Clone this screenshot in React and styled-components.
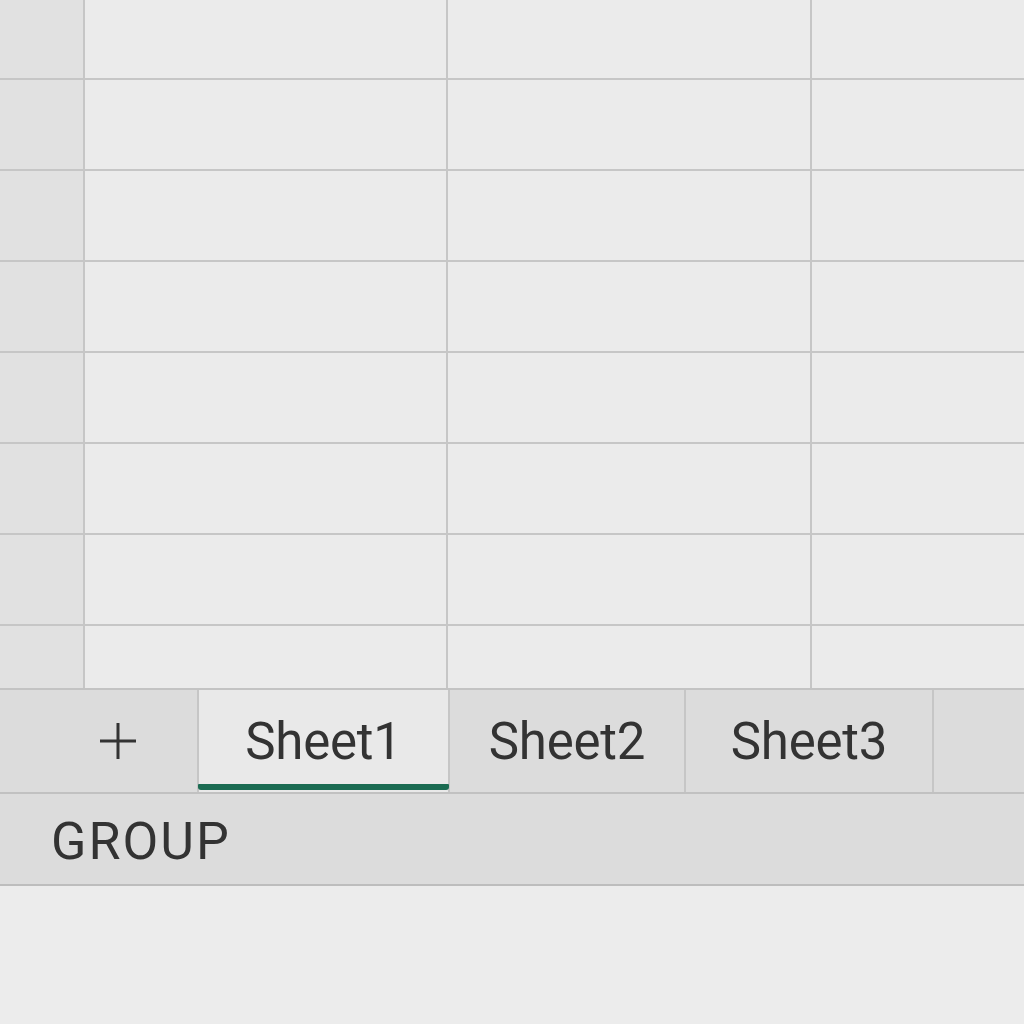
import React from 'react'
import styled, { createGlobalStyle } from 'styled-components'

const GlobalStyle = createGlobalStyle`
  html, body { margin: 0; padding: 0; background: #ececec; }
  body { font-family: Roboto, "Liberation Sans", Arial, sans-serif; }
`

const Page = styled.div`
  width: 1024px;
  height: 1024px;
  display: flex;
  flex-direction: column;
  background: #ececec;
  overflow: hidden;
`

const Grid = styled.div`
  height: 688px;
  flex: none;
  display: grid;
  grid-template-columns: 83px 361px 362px 1fr;
  grid-template-rows: 78px repeat(6, 89px) 1fr;
  gap: 2px;
  background: #c6c6c6;
  overflow: hidden;
`

const Cell = styled.div`
  background: ${(p) => (p.$header ? '#e1e1e1' : '#ebebeb')};
`

const TabBar = styled.div`
  flex: none;
  height: 102px;
  display: flex;
  background: #dcdcdc;
  border-top: 2px solid #c3c3c3;
  border-bottom: 2px solid #c1c1c1;
`

const AddButton = styled.div`
  width: 199px;
  flex: none;
  display: flex;
  align-items: center;
  justify-content: flex-end;
  padding-right: 60px;
  box-sizing: border-box;
  border-right: 2px solid #c6c6c6;
`

const Tab = styled.div`
  position: relative;
  flex: none;
  width: ${(p) => p.$w}px;
  box-sizing: border-box;
  display: flex;
  align-items: center;
  justify-content: center;
  border-right: 2px solid #c6c6c6;
  background: ${(p) => (p.$active ? '#e9e9e9' : '#dcdcdc')};
  color: #333;
  font-size: 51px;
  letter-spacing: -0.2px;
`

const Underline = styled.div`
  position: absolute;
  left: -1px;
  right: -1px;
  bottom: 2px;
  height: 6px;
  border-radius: 1px 1px 3px 3px;
  background: #1b6b52;
`

const Filler = styled.div`
  flex: 1;
`

const StatusBar = styled.div`
  flex: none;
  height: 92px;
  box-sizing: border-box;
  display: flex;
  align-items: center;
  padding: 4px 0 0 51px;
  background: #dcdcdc;
  border-bottom: 2px solid #bdbdbd;
  box-shadow: 0 1px 0 #fafafa;
  color: #333;
  font-size: 52px;
  letter-spacing: 2px;
`

const Rest = styled.div`
  flex: 1;
  background: #ececec;
`

const PlusIcon = () => (
  <svg width="38" height="40" viewBox="0 0 38 40">
    <path d="M19 2v36M1 20h36" stroke="#333" strokeWidth="3" fill="none" />
  </svg>
)

const tabs = [
  { name: 'Sheet1', w: 251, active: true },
  { name: 'Sheet2', w: 236 },
  { name: 'Sheet3', w: 248 },
]

export default function App() {
  const cells = []
  for (let r = 0; r < 8; r++) {
    for (let c = 0; c < 4; c++) {
      cells.push(<Cell key={`${r}-${c}`} $header={c === 0} />)
    }
  }

  return (
    <Page>
      <GlobalStyle />
      <Grid>{cells}</Grid>
      <TabBar>
        <AddButton>
          <PlusIcon />
        </AddButton>
        {tabs.map((t) => (
          <Tab key={t.name} $w={t.w} $active={t.active}>
            {t.name}
            {t.active && <Underline />}
          </Tab>
        ))}
        <Filler />
      </TabBar>
      <StatusBar>GROUP</StatusBar>
      <Rest />
    </Page>
  )
}
